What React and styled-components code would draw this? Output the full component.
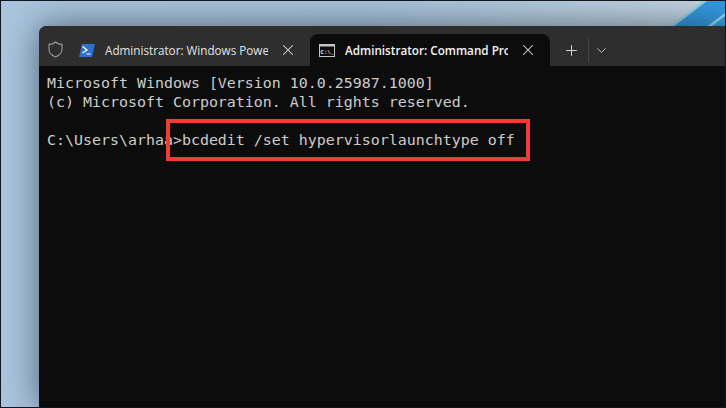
import styled, { createGlobalStyle } from "styled-components";
import { X, Plus, ChevronDown } from "lucide-react";

const GlobalStyle = createGlobalStyle`
  html, body {
    margin: 0;
    padding: 0;
    background: #000;
  }
`;

const App = () => {
  return (
    <>
      <GlobalStyle />
      <Screen>
        <Wallpaper viewBox="0 0 726 408" preserveAspectRatio="none">
          <polygon points="666,30 706,0 726,0 726,30" fill="#3399dd" />
          <polygon points="664,30 704,0 708,0 669,30" fill="#8fd4ee" />
          <polygon points="702,30 726,12 726,15 707,30" fill="#8fd8ee" />
        </Wallpaper>
        <Terminal>
          <TabBar>
            <ShieldSlot>
              <ShieldIcon />
            </ShieldSlot>
            <Tab>
              <PsIcon />
              <TabTitle>Administrator: Windows PowerShell</TabTitle>
              <CloseSlot>
                <X size={18} strokeWidth={1.4} color="#d8d8d8" />
              </CloseSlot>
            </Tab>
            <Tab $active>
              <CmdIcon />
              <TabTitle $active>Administrator: Command Prompt</TabTitle>
              <CloseSlot>
                <X size={18} strokeWidth={1.4} color="#d8d8d8" />
              </CloseSlot>
            </Tab>
            <NewTab>
              <Plus size={17} strokeWidth={1.3} color="#e4e4e4" />
            </NewTab>
            <Divider />
            <DropDown>
              <ChevronDown size={15} strokeWidth={1.4} color="#d0d0d0" />
            </DropDown>
          </TabBar>
          <Console>
            <Line>Microsoft Windows [Version 10.0.25987.1000]</Line>
            <Line>(c) Microsoft Corporation. All rights reserved.</Line>
            <Line>&nbsp;</Line>
            <Line>C:\Users\arhaa&gt;bcdedit /set hypervisorlaunchtype off</Line>
            <Highlight />
          </Console>
        </Terminal>
      </Screen>
    </>
  );
};

const ShieldIcon = () => (
  <svg width="15" height="17" viewBox="0 0 15 17">
    <path
      d="M7.5 1 C9.5 2.8 11.6 3.4 14 3.4 V8.5 C14 12.2 11 14.5 7.5 16 C4 14.5 1 12.2 1 8.5 V3.4 C3.4 3.4 5.5 2.8 7.5 1 Z"
      fill="none"
      stroke="#9a9a9a"
      strokeWidth="1.1"
    />
  </svg>
);

const PsIcon = () => (
  <IconSvg viewBox="0 0 16 13">
    <polygon points="3,0 16,0 13,13 0,13" fill="#2f6fd0" />
    <path d="M3.5 2.5 L8 6 L3.5 9" fill="none" stroke="#fff" strokeWidth="1.3" />
    <path d="M7.5 10 H11.5" stroke="#fff" strokeWidth="1.2" />
  </IconSvg>
);

const CmdIcon = () => (
  <IconSvg viewBox="0 0 16 13">
    <rect x="0.5" y="0.5" width="15" height="12" fill="#0c0c0c" stroke="#c4c4c4" />
    <rect x="0.5" y="0.5" width="15" height="2" fill="#c4c4c4" />
    <text x="1.6" y="9.8" fontSize="5.5" fontWeight="700" fontFamily="'Liberation Mono', monospace" fill="#e8e8e8">C:\_</text>
  </IconSvg>
);

const Screen = styled.div`
  position: relative;
  box-sizing: border-box;
  width: 726px;
  height: 408px;
  display: flex;
  overflow: hidden;
  border: 1px solid #10161c;
  padding: 25px 0 0 38px;
  background: linear-gradient(90deg, #a9c5de 0%, #a7c3dc 50%, #bccfdf 88%, #c6d3df 100%);
`;

const Wallpaper = styled.svg`
  position: absolute;
  top: 0;
  left: 0;
  width: 100%;
  height: 100%;
`;

const Terminal = styled.div`
  position: relative;
  flex: 1;
  display: flex;
  flex-direction: column;
  border-radius: 8px 0 0 0;
  background: #0c0c0c;
  box-shadow: 0 0 34px rgba(20, 30, 40, 0.6);
  overflow: hidden;
`;

const TabBar = styled.div`
  height: 40px;
  flex: none;
  display: flex;
  align-items: flex-end;
  background: #2e2e2e;
  font-family: "Open Sans", "Noto Sans", sans-serif;
`;

const ShieldSlot = styled.div`
  width: 35px;
  height: 32px;
  padding-right: 3px;
  padding-bottom: 2px;
  box-sizing: border-box;
  flex: none;
  display: flex;
  align-items: center;
  justify-content: center;
`;

const Tab = styled.div`
  width: ${(p) => (p.$active ? "240px" : "236px")};
  height: 32px;
  flex: none;
  box-sizing: border-box;
  display: flex;
  align-items: center;
  padding: 0 12px 0 ${(p) => (p.$active ? "9px" : "5px")};
  border-radius: 8px 8px 0 0;
  background: ${(p) => (p.$active ? "#0c0c0c" : "transparent")};
`;

const IconSvg = styled.svg`
  width: 16px;
  height: 13px;
  flex: none;
  margin-right: 10px;
`;

const TabTitle = styled.span`
  flex: 1;
  min-width: 0;
  overflow: hidden;
  white-space: nowrap;
  font-size: 11.7px;
  font-weight: ${(p) => (p.$active ? 600 : 400)};
  color: ${(p) => (p.$active ? "#f4f4f4" : "#e2e2e2")};
`;

const CloseSlot = styled.div`
  width: 20px;
  margin-left: 10px;
  display: flex;
  justify-content: center;
  flex: none;
`;

const NewTab = styled.div`
  width: 38px;
  height: 32px;
  padding-left: 4px;
  box-sizing: border-box;
  flex: none;
  display: flex;
  align-items: center;
  justify-content: center;
`;

const Divider = styled.div`
  width: 1px;
  height: 24px;
  margin-bottom: 4px;
  background: #454545;
  flex: none;
`;

const DropDown = styled.div`
  width: 24px;
  height: 32px;
  flex: none;
  display: flex;
  align-items: center;
  justify-content: center;
`;

const Console = styled.div`
  position: relative;
  flex: 1;
  padding: 8px 0 0 8px;
  font-family: "DejaVu Sans Mono", "Liberation Mono", monospace;
  font-size: 14.95px;
  line-height: 19px;
  color: #cccccc;
`;

const Line = styled.div`
  white-space: pre;
`;

const Highlight = styled.div`
  position: absolute;
  top: 53px;
  left: 127px;
  width: 364px;
  height: 42px;
  box-sizing: border-box;
  border: 4px solid #f23b33;
`;

export default App;
